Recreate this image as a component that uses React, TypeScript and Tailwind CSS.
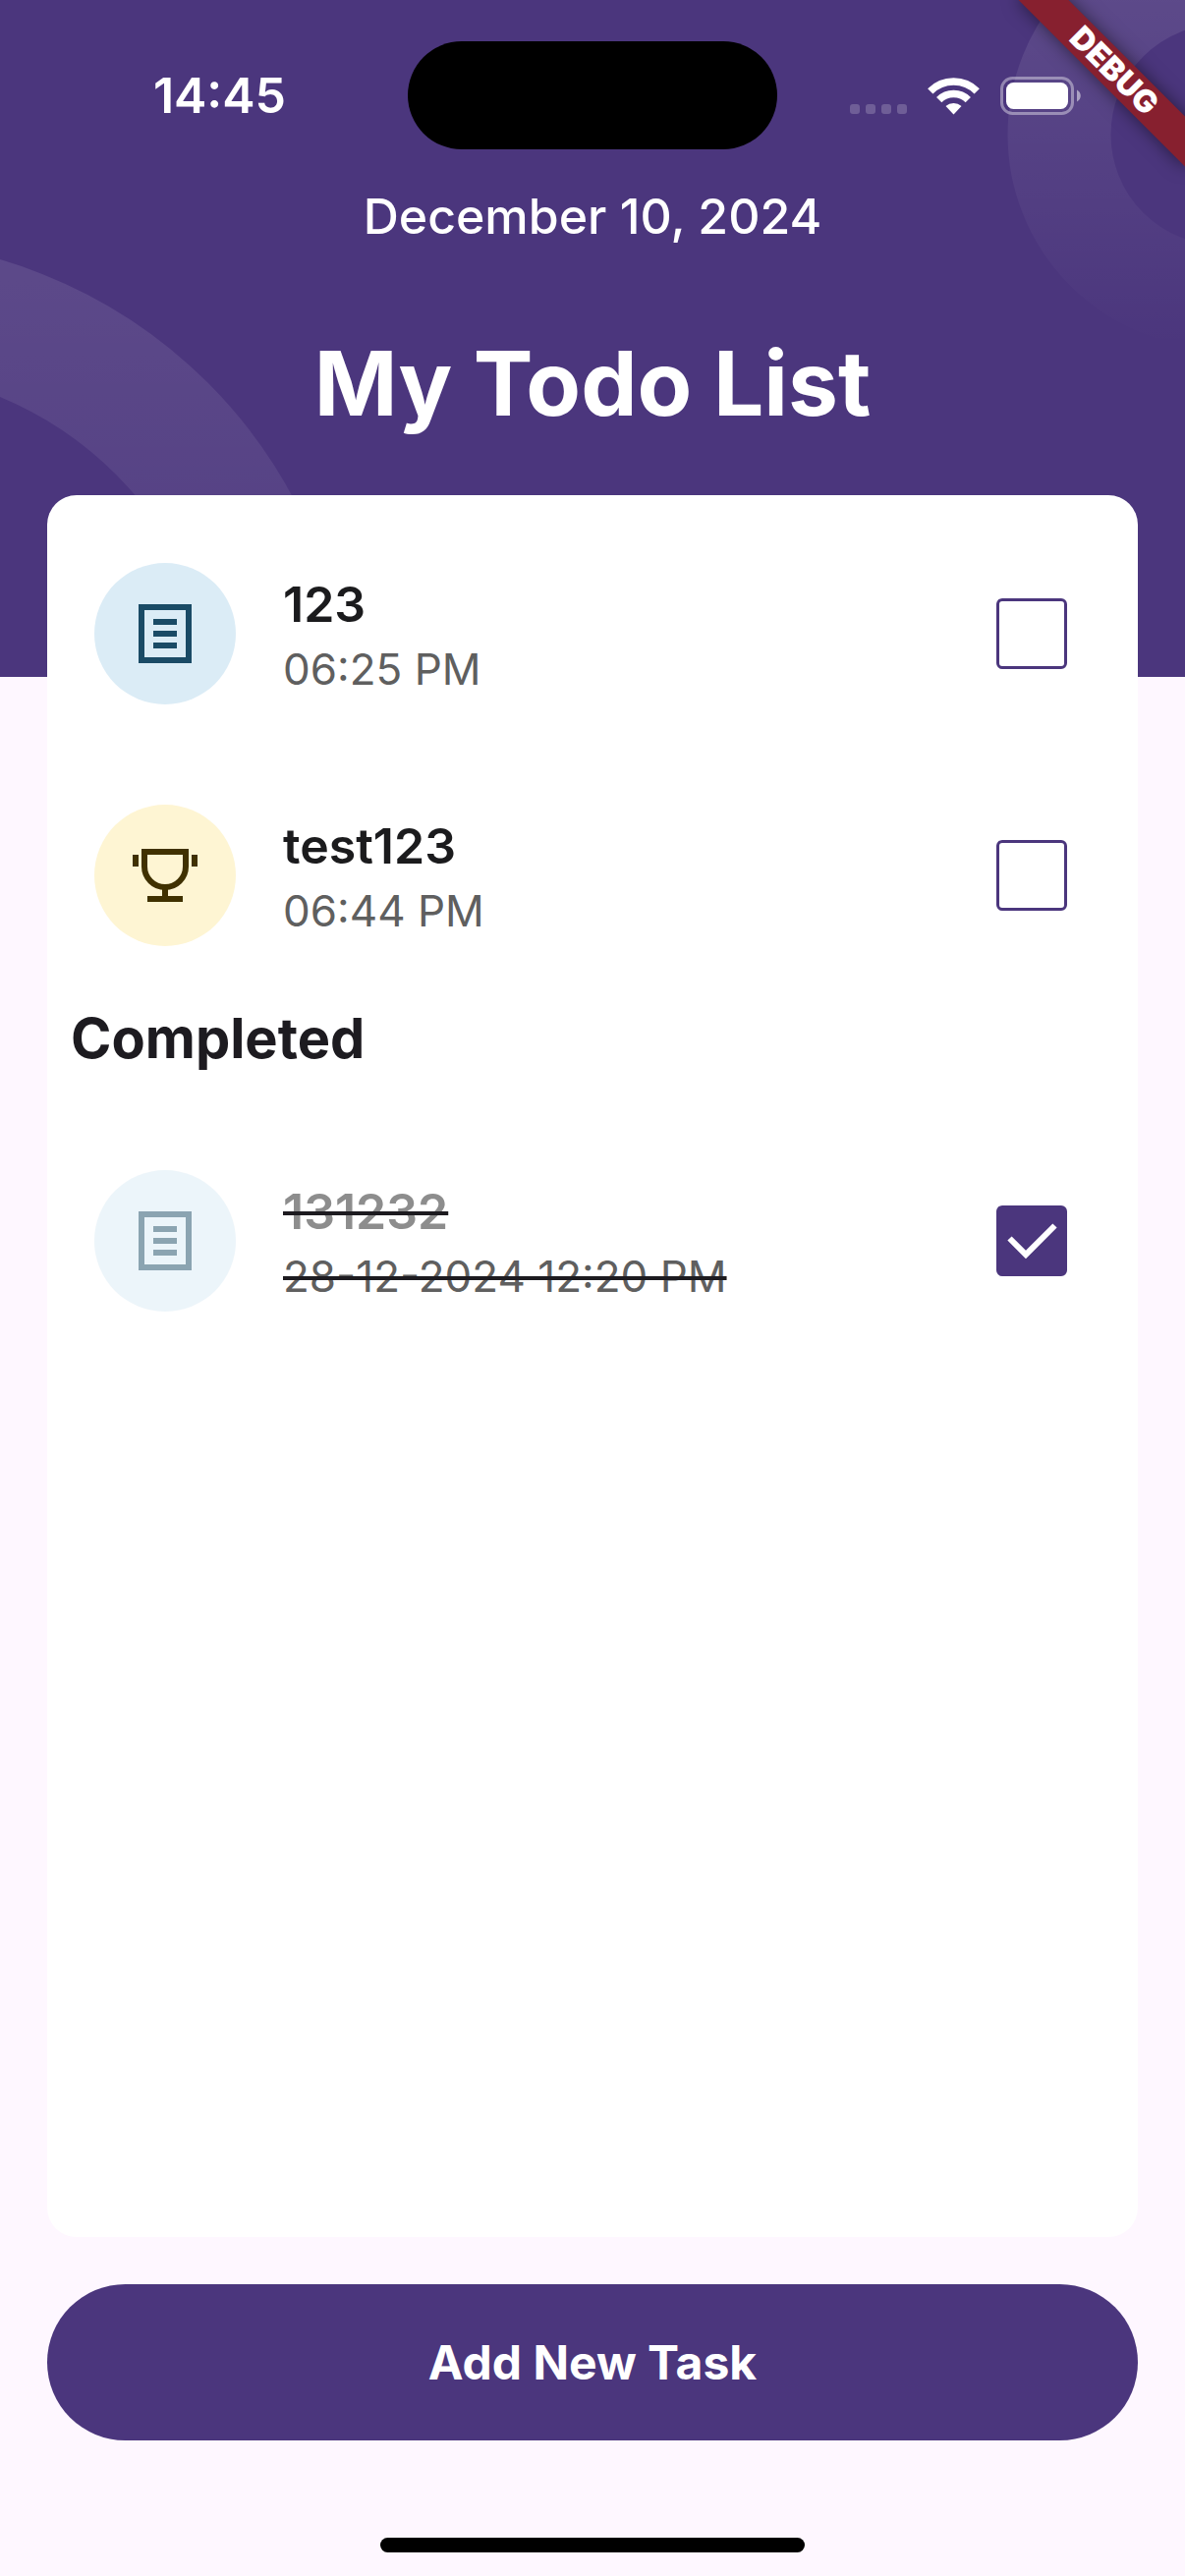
import { useState } from "react";

type Kind = "note" | "goal";

interface Task {
  id: number;
  title: string;
  time: string;
  kind: Kind;
  done: boolean;
}

const initialTasks: Task[] = [
  { id: 1, title: "123", time: "06:25 PM", kind: "note", done: false },
  { id: 2, title: "test123", time: "06:44 PM", kind: "goal", done: false },
  { id: 3, title: "131232", time: "28-12-2024 12:20 PM", kind: "note", done: true },
];

function NoteIcon() {
  return (
    <svg viewBox="0 0 72 72" className="size-[72px]" aria-hidden="true">
      <rect x="12" y="9" width="48" height="54" fill="none" stroke="#1a4b66" strokeWidth="6" />
      <path d="M24 24h24M24 36h24M24 48h24" stroke="#1a4b66" strokeWidth="6" />
    </svg>
  );
}

function TrophyIcon() {
  return (
    <svg viewBox="0 0 72 72" className="size-[72px]" aria-hidden="true">
      <path
        d="M15 12H57V27a21 21 0 0 1-42 0ZM36 48V58"
        fill="none"
        stroke="#403100"
        strokeWidth="6"
      />
      <path d="M3 15h6v12H3ZM63 15h6v12h-6ZM18 57h36v6H18Z" fill="#403100" />
    </svg>
  );
}

function TaskRow({ task, onToggle }: { task: Task; onToggle: () => void }) {
  const inputId = `task-${task.id}`;
  return (
    <li className="flex items-center gap-12 py-[51px] pr-[72px] pl-12">
      <div
        className={`flex size-36 shrink-0 items-center justify-center rounded-full ${
          task.kind === "note" ? "bg-[#dbecf6]" : "bg-[#fef5d3]"
        } ${task.done ? "opacity-50" : ""}`}
      >
        {task.kind === "note" ? <NoteIcon /> : <TrophyIcon />}
      </div>
      <label htmlFor={inputId} className="flex min-w-0 flex-1 flex-col items-start">
        <span
          className={`text-[50px] leading-[72px] font-semibold ${
            task.done ? "text-[#8d8d8d] line-through decoration-[#1d1b20] decoration-4" : "text-[#1b1b1d]"
          }`}
        >
          {task.title}
        </span>
        <span
          className={`text-[44px] leading-[60px] text-[#5f5f5f] ${
            task.done ? "line-through decoration-[#1d1b20] decoration-4" : ""
          }`}
        >
          {task.time}
        </span>
      </label>
      <div className="relative size-[72px] shrink-0">
        <input
          id={inputId}
          type="checkbox"
          checked={task.done}
          onChange={onToggle}
          className="peer block size-full appearance-none rounded-md border-3 border-[#4b367d] bg-white checked:bg-[#4b367d]"
        />
        <svg
          viewBox="0 0 72 72"
          className="pointer-events-none absolute inset-0 hidden size-full peer-checked:block"
          aria-hidden="true"
        >
          <path d="M13.5 33.5L30 50L59.5 20.5" fill="none" stroke="white" strokeWidth="6" />
        </svg>
      </div>
    </li>
  );
}

function HeaderRings() {
  return (
    <svg className="pointer-events-none absolute inset-0 size-full" aria-hidden="true">
      <defs>
        <linearGradient id="ring-left" gradientUnits="userSpaceOnUse" x1="0" y1="244" x2="0" y2="1000">
          <stop offset="0" stopColor="white" stopOpacity="0.1" />
          <stop offset="1" stopColor="white" stopOpacity="0" />
        </linearGradient>
        <linearGradient id="ring-right" gradientUnits="userSpaceOnUse" x1="0" y1="-81" x2="0" y2="354">
          <stop offset="0" stopColor="white" stopOpacity="0.12" />
          <stop offset="1" stopColor="white" stopOpacity="0" />
        </linearGradient>
      </defs>
      <circle cx="-140" cy="741" r="431" fill="none" stroke="url(#ring-left)" strokeWidth="132" />
      <svg x="100%" y="0" overflow="visible">
        <circle cx="37" cy="137" r="165" fill="none" stroke="url(#ring-right)" strokeWidth="105" />
      </svg>
    </svg>
  );
}

function StatusBar() {
  return (
    <div className="relative flex h-[152px] items-center pt-[42px]">
      <div className="flex flex-1 justify-center pl-8">
        <span className="text-[50px] leading-none font-semibold">14:45</span>
      </div>
      <div className="h-[110px] w-[376px] rounded-full bg-black" />
      <div className="flex flex-1 items-center justify-center pr-8">
        <svg viewBox="0 0 236 40" className="h-10 w-[236px]" aria-hidden="true">
          <g fill="white" fillOpacity="0.2">
            <rect x="0" y="29" width="10" height="10" rx="3" />
            <rect x="16" y="29" width="10" height="10" rx="3" />
            <rect x="32" y="29" width="10" height="10" rx="3" />
            <rect x="48" y="29" width="10" height="10" rx="3" />
          </g>
          <g fill="none" stroke="white" strokeWidth="7.5">
            <path d="M81.800 15.800a33.500 33.500 0 0 1 47.400 0" />
            <path d="M90.700 24.700a21 21 0 0 1 29.600 0" />
          </g>
          <path d="M105.500 39.500l-8-8.500a12 12 0 0 1 16 0Z" fill="white" />
          <rect x="154.500" y="2.500" width="72" height="36" rx="11" fill="none" stroke="white" strokeOpacity="0.4" strokeWidth="3" />
          <rect x="159" y="7" width="63" height="27" rx="7.500" fill="white" />
          <path d="M231 14.500c5 2.500 5 9.500 0 12Z" fill="white" fillOpacity="0.5" />
        </svg>
      </div>
    </div>
  );
}

export default function App() {
  const [tasks, setTasks] = useState(initialTasks);
  const toggle = (id: number) =>
    setTasks((list) => list.map((t) => (t.id === id ? { ...t, done: !t.done } : t)));
  const open = tasks.filter((t) => !t.done);
  const completed = tasks.filter((t) => t.done);

  return (
    <div className="flex min-h-screen flex-col bg-[#fef7ff] font-[Inter,sans-serif]">
      <header className="relative h-[689px] shrink-0 overflow-hidden bg-[#4b367d] text-center text-white">
        <HeaderRings />
        <StatusBar />
        <p className="relative mt-[38px] text-[50px] leading-[60px] font-medium">December 10, 2024</p>
        <h1 className="relative mt-21 text-[91px] leading-[112px] font-bold">My Todo List</h1>
        <div className="absolute top-[54px] -right-12 flex h-9 w-60 rotate-45 items-center justify-center bg-[#87202f] text-[32px] leading-none font-black shadow-[0_0_18px_rgba(0,0,0,0.5)]">
          DEBUG
        </div>
      </header>

      <main className="relative -mt-[185px] flex flex-1 flex-col px-12">
        <section className="flex-1 rounded-[30px] bg-white pt-[18px] text-[#1d1b20]">
          <ul>
            {open.map((t) => (
              <TaskRow key={t.id} task={t} onToggle={() => toggle(t.id)} />
            ))}
          </ul>
          <h2 className="mb-10 px-6 text-[56px] leading-[86px] font-bold">Completed</h2>
          <ul>
            {completed.map((t) => (
              <TaskRow key={t.id} task={t} onToggle={() => toggle(t.id)} />
            ))}
          </ul>
        </section>
        <button
          type="button"
          className="mt-12 h-[159px] rounded-full bg-[#4b367d] text-5xl font-bold text-white"
        >
          Add New Task
        </button>
      </main>

      <div className="mt-[99px] mb-6 h-[15px] w-[432px] self-center rounded-full bg-black" />
    </div>
  );
}
